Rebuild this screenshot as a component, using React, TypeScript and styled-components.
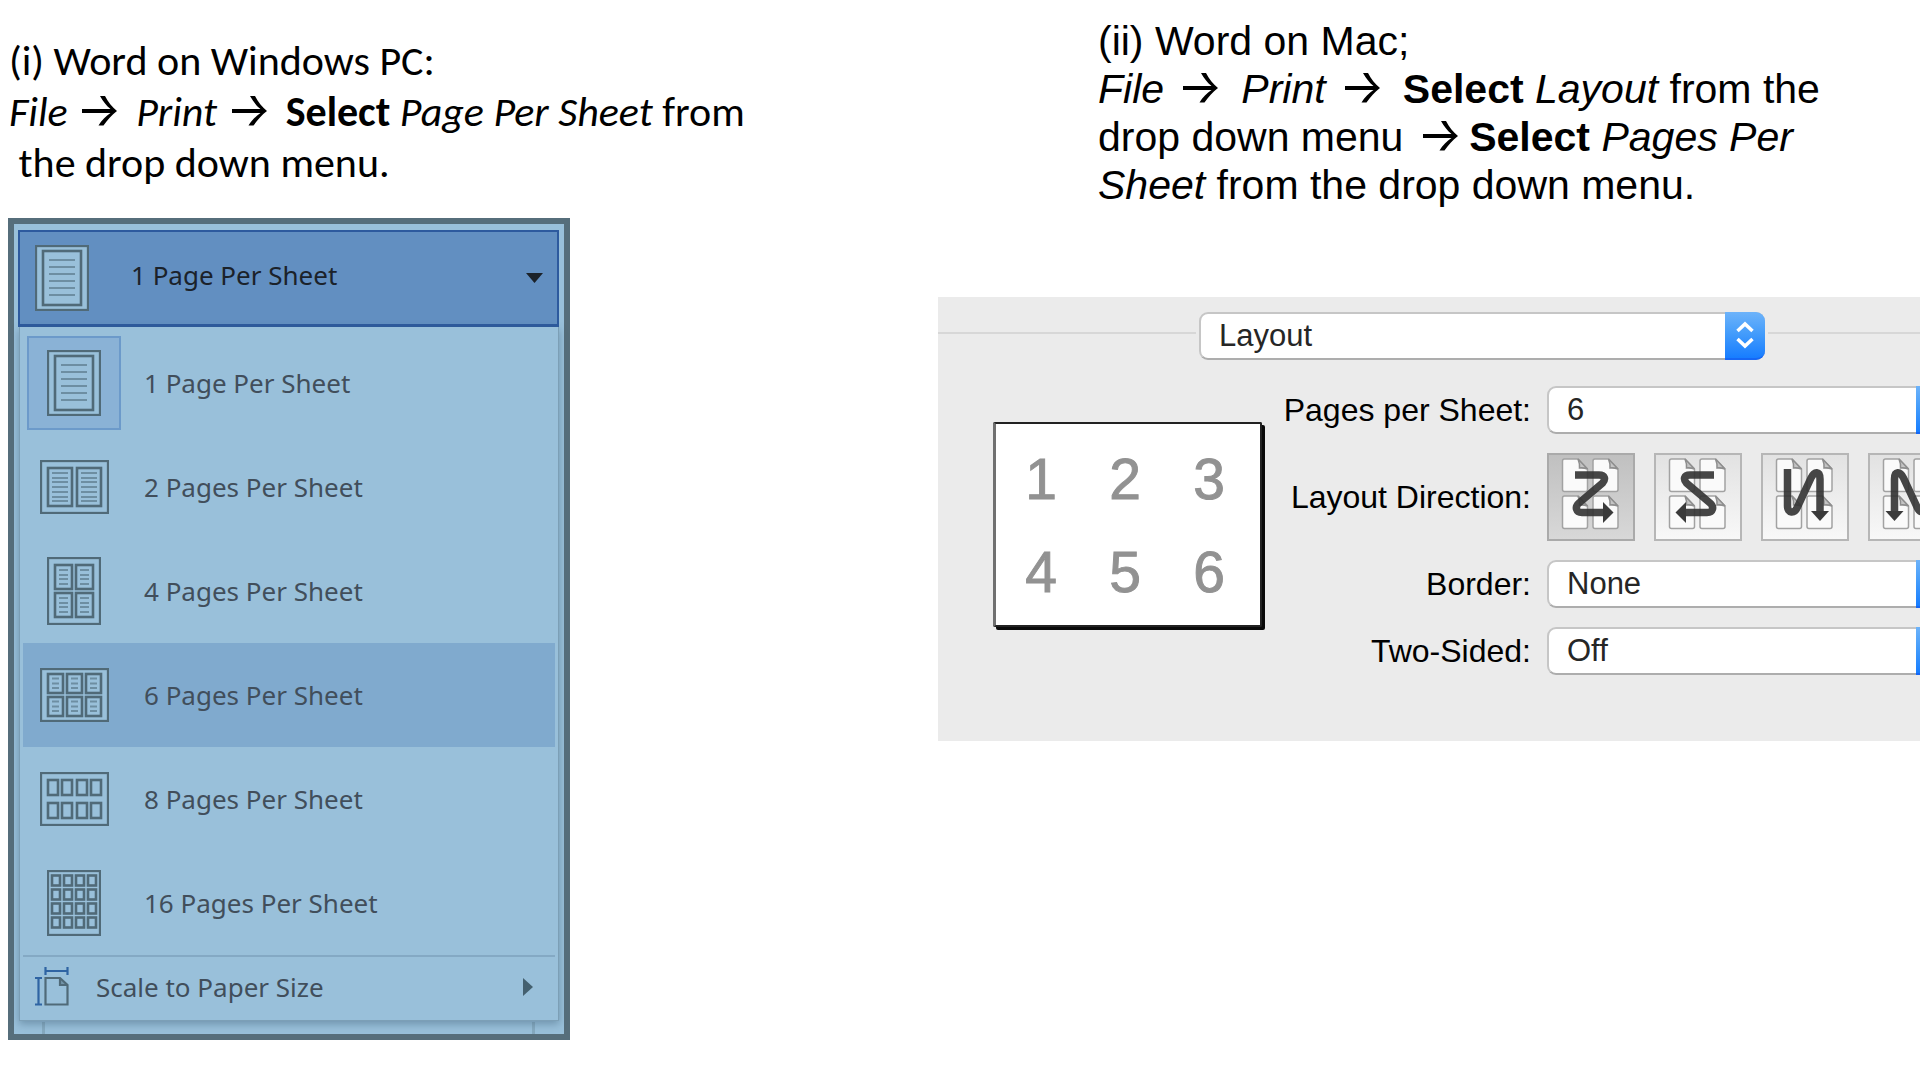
import React, { useState } from 'react';
import styled, { createGlobalStyle, css } from 'styled-components';

const GlobalStyle = createGlobalStyle`
  *, *::before, *::after { box-sizing: border-box; }
  body { margin: 0; background: #fff; color: #000; overflow-x: hidden; }
  button, select { font: inherit; color: inherit; margin: 0; }
`;

const Page = styled.main`
  display: grid;
  grid-template-columns: minmax(0, 938fr) minmax(0, 982fr);
  align-items: start;
`;

const WindowsColumn = styled.section`
  padding: 35px 8px 40px;
`;

const MacColumn = styled.section`
  padding-top: 17px;
`;

const WindowsSteps = styled.p`
  margin: 0 0 30px;
  padding-left: 1px;
  font: 42px/51px Carlito, Calibri, sans-serif;
  white-space: pre;
`;

const MacSteps = styled.p`
  margin: 0 0 88px 160px;
  font: 41px/48px 'Liberation Sans', Arial, sans-serif;
  white-space: pre;
`;

const ArrowSvg = styled.svg<{ $lead: number }>`
  width: 35px;
  height: 30px;
  margin: 0 0 0 ${(p) => p.$lead}px;
  vertical-align: baseline;
`;

function Arrow({ lead }: { lead: number }) {
  return (
    <ArrowSvg $lead={lead} viewBox="0 0 35 30" role="img" aria-label="then">
      <path d="M0 13H28.500C24 9.500 21 5 18 0H23C26 6 30 11 35 15C29.500 19 25.500 24 21.500 29.500H16.500C19.500 24.500 24 20 28.500 17H0Z" fill="#000" />
    </ArrowSvg>
  );
}

/* ---------- Windows menu ---------- */

const sheetBlue = '#99c0da';
const inkGrey = '#506a78';

const MenuFrame = styled.div`
  width: 562px;
  max-width: 100%;
  padding: 6px 5px 13px 4px;
  border: 6px solid #566e7b;
  background:
    linear-gradient(#86aac0, #86aac0) 28px 100% / 3px 12px no-repeat,
    linear-gradient(#86aac0, #86aac0) 518px 100% / 3px 12px no-repeat,
    ${sheetBlue};
  font: 26px/36px 'Noto Sans', 'Segoe UI', sans-serif;
  color: #414e5b;
`;

const MenuHeader = styled.button`
  display: flex;
  align-items: center;
  width: 100%;
  height: 97px;
  padding: 0 14px 0 15px;
  border: 2px solid #2d5a9e;
  border-bottom-width: 3px;
  background: #628fc1;
  color: #1b222a;
  text-align: left;
`;

const HeaderLabel = styled.span`
  flex: 1;
  padding: 0 0 6px 42px;
`;

const MenuList = styled.div`
  margin-left: 1px;
  padding: 4px 3px 3px;
  border: 1px solid #7c9fb6;
  border-top: 0;
  background: ${sheetBlue};
  box-shadow: 0 3px 8px rgba(60, 90, 115, 0.45);
`;

const IconCell = styled.span<{ $selected: boolean }>`
  display: grid;
  place-items: center;
  width: 94px;
  height: 94px;
  ${(p) =>
    p.$selected &&
    css`
      border: 2px solid #6c9aca;
      background: #8ab2d6;
    `}
`;

const MenuItem = styled.button<{ $active: boolean }>`
  display: flex;
  align-items: center;
  gap: 23px;
  width: 100%;
  height: 104px;
  padding: 0 4px;
  border: 0;
  background: ${(p) => (p.$active ? '#80aace' : 'transparent')};
  text-align: left;
`;

const MenuFooter = styled.button`
  display: flex;
  align-items: center;
  gap: 27px;
  width: 100%;
  height: 62px;
  padding: 0 22px 0 12px;
  border: 0;
  border-top: 2px solid #84a9c4;
  background: transparent;
  text-align: left;
`;

const FooterLabel = styled.span`
  flex: 1;
`;

type Span = [number, number];
interface SheetSpec {
  w: number;
  h: number;
  cols: Span[];
  rows: Span[];
  inset?: number;
  lines?: number[];
}

const sheets: Record<number, SheetSpec> = {
  1: { w: 54, h: 66, cols: [[7, 47]], rows: [[5, 61]], inset: 7, lines: [10, 17, 24, 31, 38, 45] },
  2: { w: 69, h: 54, cols: [[7, 33], [36, 62]], rows: [[7, 47]], inset: 5, lines: [6, 11, 15, 20, 25, 30, 34] },
  4: { w: 54, h: 68, cols: [[7, 26], [28, 47]], rows: [[7, 33], [35, 61]], inset: 5, lines: [6, 11, 15, 20] },
  6: { w: 69, h: 54, cols: [[7, 24], [26, 43], [45, 62]], rows: [[5, 26], [28, 49]], inset: 5, lines: [5.5, 10.5, 15] },
  8: { w: 69, h: 54, cols: [[7, 19], [21, 33], [36, 48], [50, 62]], rows: [[7, 24], [30, 47]] },
  16: {
    w: 54,
    h: 66,
    cols: [[4, 14], [16, 26], [28, 38], [40, 50]],
    rows: [[4.5, 16.5], [18.5, 30.5], [32.5, 44.5], [46.5, 58.5]],
  },
};

function SheetIcon({ pages }: { pages: number }) {
  const s = sheets[pages];
  return (
    <svg width={s.w} height={s.h} viewBox={`0 0 ${s.w} ${s.h}`} fill={sheetBlue} stroke={inkGrey} strokeWidth="2.3" aria-hidden="true">
      <rect x="1" y="1" width={s.w - 2} height={s.h - 2} />
      {s.rows.map(([y0, y1]) =>
        s.cols.map(([x0, x1]) => (
          <g key={`${x0}-${y0}`}>
            <rect x={x0 + 1} y={y0 + 1} width={x1 - x0 - 2} height={y1 - y0 - 2} strokeWidth="2.6" />
            {s.lines?.map((l) => (
              <path key={l} d={`M${x0 + s.inset!} ${y0 + l}H${x1 - s.inset!}`} stroke="#6d8ea2" strokeWidth="2" />
            ))}
          </g>
        )),
      )}
    </svg>
  );
}

function ScaleIcon() {
  return (
    <svg width="34" height="40" viewBox="0 0 34 40" fill="none" strokeWidth="2.2" aria-hidden="true">
      <path d="M10.500 4H32.500M10.500 0V8M32.500 0V8M3.500 11V37.500M0 11H7M0 37.500H7" stroke="#2f64a3" />
      <path d="M10.500 11H25L32.500 18V37.500H10.500ZM25 11V18H32.500" stroke={inkGrey} />
      <path d="M25 11L32.500 18H25Z" fill={inkGrey} fillOpacity="0.5" />
    </svg>
  );
}

const options = [1, 2, 4, 6, 8, 16];
const optionLabel = (n: number) => `${n} ${n === 1 ? 'Page' : 'Pages'} Per Sheet`;

function PagesMenu() {
  const [selected, setSelected] = useState(1);
  const [active, setActive] = useState(6);
  return (
    <MenuFrame>
      <MenuHeader type="button" aria-haspopup="menu" aria-expanded="true">
        <SheetIcon pages={selected} />
        <HeaderLabel>{optionLabel(selected)}</HeaderLabel>
        <svg width="17" height="10" viewBox="0 0 17 10" aria-hidden="true">
          <path d="M0 0H17L8.500 10Z" fill="#1b222a" />
        </svg>
      </MenuHeader>
      <MenuList role="menu">
        {options.map((n) => (
          <MenuItem
            key={n}
            type="button"
            role="menuitemradio"
            aria-checked={n === selected}
            $active={n === active}
            onMouseEnter={() => setActive(n)}
            onClick={() => setSelected(n)}
          >
            <IconCell $selected={n === selected}>
              <SheetIcon pages={n} />
            </IconCell>
            {optionLabel(n)}
          </MenuItem>
        ))}
        <MenuFooter type="button" role="menuitem">
          <ScaleIcon />
          <FooterLabel>Scale to Paper Size</FooterLabel>
          <svg width="10" height="18" viewBox="0 0 10 18" aria-hidden="true">
            <path d="M0 0L10 9L0 18Z" fill="#44606f" />
          </svg>
        </MenuFooter>
      </MenuList>
    </MenuFrame>
  );
}

/* ---------- Mac print panel ---------- */

const PrintPanel = styled.form`
  height: 444px;
  padding-top: 15px;
  overflow: hidden;
  background: #ebebeb;
  font: 31px/36px 'Liberation Sans', Arial, sans-serif;
`;

const SectionBar = styled.div`
  display: grid;
  grid-template-columns: 258px 566px 1fr;
  align-items: center;
  gap: 3px;
`;

const Rule = styled.hr`
  width: 100%;
  height: 2px;
  margin: 0 0 6px;
  border: 0;
  background: #d7d7d7;
`;

const PopupBox = styled.span`
  display: grid;
  align-items: stretch;
  height: 48px;
`;

const PopupSelect = styled.select`
  grid-area: 1 / 1;
  width: 100%;
  padding: 0 48px 0 18px;
  appearance: none;
  border: 2px solid #c6c6c6;
  border-bottom-color: #adadad;
  border-radius: 9px;
  background: #fff;
  color: #262626;
`;

const PopupCap = styled.span`
  grid-area: 1 / 1;
  justify-self: end;
  display: grid;
  place-items: center;
  width: 40px;
  border-bottom: 2px solid #1667f5;
  border-radius: 0 9px 9px 0;
  background: linear-gradient(#6db3fa, #459dfb 45%, #177dff);
  pointer-events: none;
`;

function Popup({ id, label, values }: { id: string; label?: string; values: string[] }) {
  return (
    <PopupBox>
      <PopupSelect id={id} aria-label={label}>
        {values.map((v) => (
          <option key={v}>{v}</option>
        ))}
      </PopupSelect>
      <PopupCap>
        <svg width="18" height="28" viewBox="0 0 18 28" fill="none" stroke="#fff" strokeWidth="3.500" aria-hidden="true">
          <path d="M1.500 10L9 3L16.500 10M1.500 18L9 25L16.500 18" />
        </svg>
      </PopupCap>
    </PopupBox>
  );
}

const PanelBody = styled.div`
  display: flex;
  align-items: flex-start;
  padding: 26px 0 0 55px;
`;

const Preview = styled.div`
  display: grid;
  grid-template-columns: repeat(3, 84px);
  grid-auto-rows: 93px;
  flex: none;
  width: 269px;
  height: 205px;
  margin-top: 36px;
  padding: 9px 0 0 3px;
  border: 2px solid #222;
  border-left: 3px solid #707070;
  border-radius: 2px;
  background: #fff;
  box-shadow: 3px 3px 0 #0a0a0a;
  font-size: 57px;
  line-height: 93px;
  text-align: center;
  color: #929292;
  -webkit-text-stroke: 1px #929292;
`;

const Settings = styled.div`
  display: grid;
  grid-template-columns: 269px 409px;
  gap: 19px 16px;
  align-items: center;
  flex: none;
`;

const FieldLabel = styled.label`
  font-size: 32px;
  text-align: right;
  white-space: nowrap;
`;

const DirectionRow = styled.div`
  display: flex;
  gap: 19px;
`;

const DirectionButton = styled.button<{ $on: boolean }>`
  flex: none;
  width: 88px;
  height: 88px;
  padding: 0;
  border: 2px solid ${(p) => (p.$on ? '#aaaaaa' : '#b6b6b6')};
  background: ${(p) => (p.$on ? 'linear-gradient(#c0c0c0, #d8d8d8)' : 'linear-gradient(#e2e2e2, #f8f8f8)')};

  svg { display: block; }
`;

const zigzag = {
  line: 'M28 22H52C58 22 59 26 55.500 30L32 50C27.500 54 29 59.500 35 59.500H57',
  head: 'M56 49L66.500 59.500L56 70Z',
};
const weave = {
  line: 'M26.500 16V53C26.500 60.500 33.500 61 36.500 54L50 25C53.500 17.500 59 18 59 26V59',
  head: 'M50 58H68L59 68Z',
};
const directions = [
  { name: 'Across, then down', shape: zigzag },
  { name: 'Across from right, then down', shape: zigzag, flip: 'translate(88 0) scale(-1 1)' },
  { name: 'Down, then across', shape: weave },
  { name: 'Down, then across from right', shape: weave, flip: 'translate(85.5 0) scale(-1 1)' },
];

function DirectionIcon({ shape, flip }: { shape: typeof zigzag; flip?: string }) {
  return (
    <svg width="84" height="84" viewBox="2 2 84 84" aria-hidden="true">
      {[6, 43].map((y) =>
        [15.5, 46].map((x) => (
          <g key={`${x}-${y}`} transform={`translate(${x} ${y})`} stroke="#8e8e8e" strokeWidth="1.5">
            <path d="M2 0H15.500L25 10V30.500Q25 32.500 23 32.500H2Q0 32.500 0 30.500V2Q0 0 2 0Z" fill="#fafafa" stroke="#a2a2a2" />
            <path d="M15.500 0Q17.500 5 17 9Q21 8.500 25 10Z" fill="#c4c4c4" />
          </g>
        )),
      )}
      <g transform={flip} opacity="0.9">
        <path d={shape.line} fill="none" stroke="#333" strokeWidth="7.500" />
        <path d={shape.head} fill="#262626" />
      </g>
    </svg>
  );
}

function MacPrint() {
  const [direction, setDirection] = useState(0);
  return (
    <PrintPanel>
      <SectionBar>
        <Rule />
        <Popup id="section" label="Print options section" values={['Layout']} />
        <Rule />
      </SectionBar>
      <PanelBody>
        <Preview>
          {[1, 2, 3, 4, 5, 6].map((n) => (
            <span key={n}>{n}</span>
          ))}
        </Preview>
        <Settings>
          <FieldLabel htmlFor="pages">Pages per Sheet:</FieldLabel>
          <Popup id="pages" values={['6']} />
          <FieldLabel as="span" id="direction">Layout Direction:</FieldLabel>
          <DirectionRow role="group" aria-labelledby="direction">
            {directions.map((d, i) => (
              <DirectionButton
                key={d.name}
                type="button"
                aria-label={d.name}
                aria-pressed={i === direction}
                $on={i === direction}
                onClick={() => setDirection(i)}
              >
                <DirectionIcon shape={d.shape} flip={d.flip} />
              </DirectionButton>
            ))}
          </DirectionRow>
          <FieldLabel htmlFor="border">Border:</FieldLabel>
          <Popup id="border" values={['None']} />
          <FieldLabel htmlFor="sides">Two-Sided:</FieldLabel>
          <Popup id="sides" values={['Off']} />
        </Settings>
      </PanelBody>
    </PrintPanel>
  );
}

export default function App() {
  return (
    <>
      <GlobalStyle />
      <Page>
        <WindowsColumn>
          <WindowsSteps>
            (i) Word on Windows PC:
            <br />
            <i>File</i> <Arrow lead={5} />{'  '}<i>Print</i> <Arrow lead={5} />{'  '}<b>Select</b> <i>Page Per Sheet</i> from
            <br />
            {' '}the drop down menu.
          </WindowsSteps>
          <PagesMenu />
        </WindowsColumn>
        <MacColumn>
          <MacSteps>
            (ii) Word on Mac;
            <br />
            <i>File</i> <Arrow lead={8} />{'  '}<i>Print</i> <Arrow lead={8} />{'  '}<b>Select</b> <i>Layout</i> from the
            <br />
            drop down menu <Arrow lead={8} /> <b>Select</b> <i>Pages Per</i>
            <br />
            <i>Sheet</i> from the drop down menu.
          </MacSteps>
          <MacPrint />
        </MacColumn>
      </Page>
    </>
  );
}
